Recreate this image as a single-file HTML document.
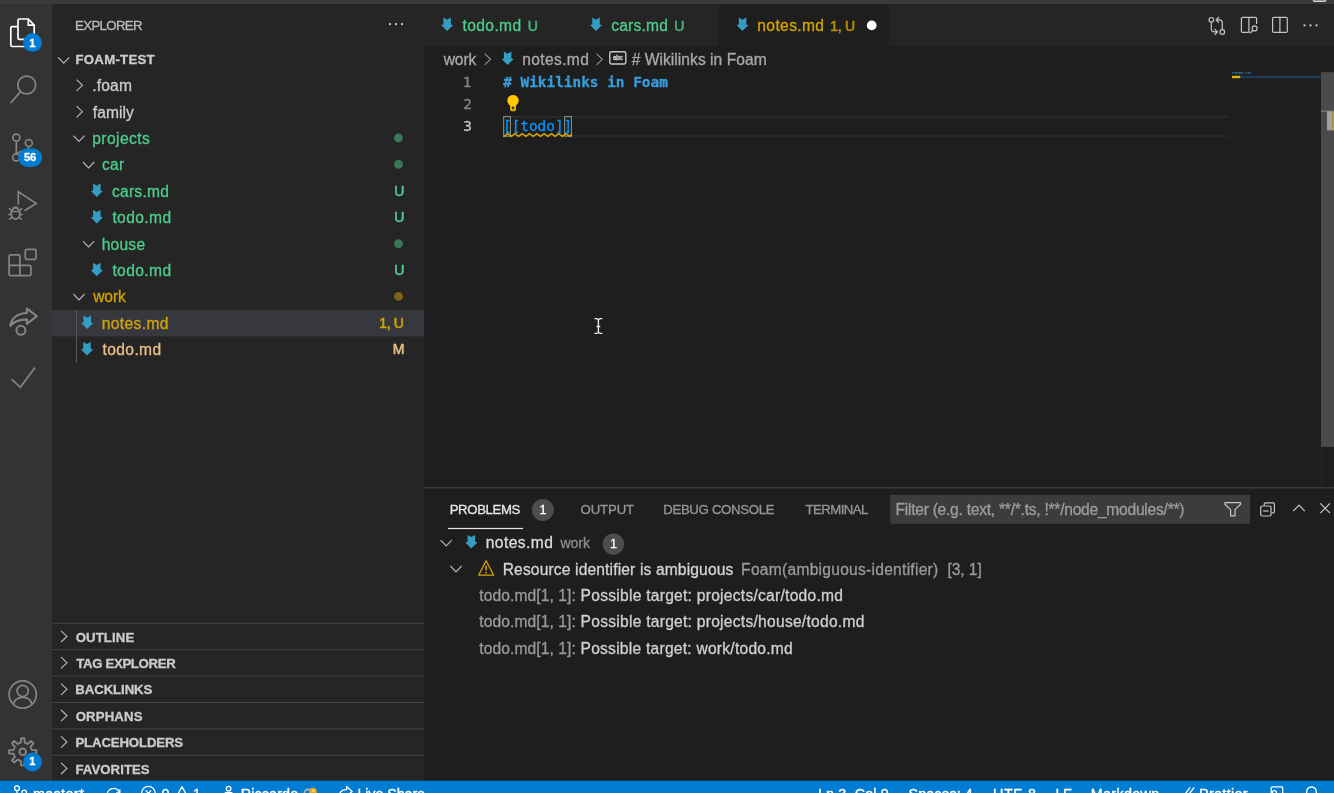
<!DOCTYPE html>
<html lang="en">
<head>
<meta charset="utf-8">
<title>notes.md - foam-test</title>
<style>
*{box-sizing:border-box;margin:0;padding:0}
html,body{width:1334px;height:793px;overflow:hidden;background:#1e1e1e}
body{position:relative;font-family:'Liberation Sans','Noto Sans CJK SC',sans-serif;font-size:15.6px;color:#cccccc}
.abs,.t{position:absolute;white-space:nowrap}
.t{line-height:1;height:1em;-webkit-text-stroke-width:0.3px}
svg{position:absolute;left:0;top:0;overflow:visible;pointer-events:none}
#txt{position:absolute;left:0;top:0;width:1334px;height:793px;will-change:transform}
</style>
</head>
<body>
<svg width="1334" height="793" viewBox="0 0 1334 793"><rect x="0" y="0" width="1334" height="4" fill="#3a3a3a"/>
<rect x="0" y="4" width="52" height="776.7" fill="#333333"/>
<rect x="52" y="4" width="372" height="776.7" fill="#252526"/>
<rect x="424" y="4" width="910" height="41.6" fill="#252526"/>
<rect x="719" y="4" width="169.8" height="41.6" fill="#1e1e1e"/>
<rect x="0" y="780.7" width="1334" height="12.3" fill="#007cd2"/>
<rect x="388.95" y="23.05" width="2.1" height="2.1" fill="#c5c5c5" rx="0.7"/>
<rect x="394.95" y="23.05" width="2.1" height="2.1" fill="#c5c5c5" rx="0.7"/>
<rect x="400.95" y="23.05" width="2.1" height="2.1" fill="#c5c5c5" rx="0.7"/>
<path d="M58.10 57.30 L63.70 63.10 L69.30 57.30" fill="none" stroke="#b8b8b8" stroke-width="1.15" stroke-linecap="butt" stroke-linejoin="miter" />
<rect x="52" y="310" width="372" height="26.4" fill="#37373e"/>
<rect x="76" y="310" width="1" height="52.8" fill="#585858"/>
<path d="M76.60 79.70 L82.40 85.30 L76.60 90.90" fill="none" stroke="#b8b8b8" stroke-width="1.15" stroke-linecap="butt" stroke-linejoin="miter" />
<path d="M76.60 106.10 L82.40 111.70 L76.60 117.30" fill="none" stroke="#b8b8b8" stroke-width="1.15" stroke-linecap="butt" stroke-linejoin="miter" />
<path d="M73.40 135.60 L79.00 141.40 L84.60 135.60" fill="none" stroke="#b8b8b8" stroke-width="1.15" stroke-linecap="butt" stroke-linejoin="miter" />
<circle cx="398.5" cy="138.00" r="4.4" fill="#4fcc8c" opacity="0.5"/>
<path d="M83.00 162.00 L88.60 167.80 L94.20 162.00" fill="none" stroke="#b8b8b8" stroke-width="1.15" stroke-linecap="butt" stroke-linejoin="miter" />
<circle cx="398.5" cy="164.40" r="4.4" fill="#4fcc8c" opacity="0.5"/>
<polygon points="93.10,183.60 96.70,185.70 100.60,183.60 100.60,190.40 102.90,191.00 96.70,197.10 90.90,191.00 93.10,190.40" fill="#349dc2" />
<polygon points="93.10,210.00 96.70,212.10 100.60,210.00 100.60,216.80 102.90,217.40 96.70,223.50 90.90,217.40 93.10,216.80" fill="#349dc2" />
<path d="M83.00 241.20 L88.60 247.00 L94.20 241.20" fill="none" stroke="#b8b8b8" stroke-width="1.15" stroke-linecap="butt" stroke-linejoin="miter" />
<circle cx="398.5" cy="243.60" r="4.4" fill="#4fcc8c" opacity="0.5"/>
<polygon points="93.10,262.80 96.70,264.90 100.60,262.80 100.60,269.60 102.90,270.20 96.70,276.30 90.90,270.20 93.10,269.60" fill="#349dc2" />
<path d="M73.40 294.00 L79.00 299.80 L84.60 294.00" fill="none" stroke="#b8b8b8" stroke-width="1.15" stroke-linecap="butt" stroke-linejoin="miter" />
<circle cx="398.5" cy="296.40" r="4.4" fill="#d3a500" opacity="0.5"/>
<polygon points="83.50,315.60 87.10,317.70 91.00,315.60 91.00,322.40 93.30,323.00 87.10,329.10 81.30,323.00 83.50,322.40" fill="#349dc2" />
<polygon points="83.30,342.00 86.90,344.10 90.80,342.00 90.80,348.80 93.10,349.40 86.90,355.50 81.10,349.40 83.30,348.80" fill="#349dc2" />
<rect x="52" y="622.8" width="372" height="1" fill="#454545"/>
<path d="M61.10 630.80 L66.90 636.40 L61.10 642.00" fill="none" stroke="#b8b8b8" stroke-width="1.15" stroke-linecap="butt" stroke-linejoin="miter" />
<rect x="52" y="649.2" width="372" height="1" fill="#454545"/>
<path d="M61.10 657.20 L66.90 662.80 L61.10 668.40" fill="none" stroke="#b8b8b8" stroke-width="1.15" stroke-linecap="butt" stroke-linejoin="miter" />
<rect x="52" y="675.6" width="372" height="1" fill="#454545"/>
<path d="M61.10 683.60 L66.90 689.20 L61.10 694.80" fill="none" stroke="#b8b8b8" stroke-width="1.15" stroke-linecap="butt" stroke-linejoin="miter" />
<rect x="52" y="702" width="372" height="1" fill="#454545"/>
<path d="M61.10 710.00 L66.90 715.60 L61.10 721.20" fill="none" stroke="#b8b8b8" stroke-width="1.15" stroke-linecap="butt" stroke-linejoin="miter" />
<rect x="52" y="728.4" width="372" height="1" fill="#454545"/>
<path d="M61.10 736.40 L66.90 742.00 L61.10 747.60" fill="none" stroke="#b8b8b8" stroke-width="1.15" stroke-linecap="butt" stroke-linejoin="miter" />
<rect x="52" y="754.8" width="372" height="1" fill="#454545"/>
<path d="M61.10 762.80 L66.90 768.40 L61.10 774.00" fill="none" stroke="#b8b8b8" stroke-width="1.15" stroke-linecap="butt" stroke-linejoin="miter" />
<path d="M17.9 26.7 H12.2 Q10.8 26.7 10.8 28.1 V45.1 Q10.8 46.5 12.2 46.5 H25.2" fill="none" stroke="#ffffff" stroke-width="1.7" stroke-linecap="butt" stroke-linejoin="miter" />
<path d="M28.3 19 H19.4 Q18 19 18 20.4 V37.9 Q18 39.3 19.4 39.3 H26 M34.2 34 V25.2 L28.3 19 V25.2 H34.2" fill="none" stroke="#ffffff" stroke-width="1.7" stroke-linecap="butt" stroke-linejoin="round" />
<circle cx="32.50" cy="42.60" r="9.50" fill="#007cd2" stroke="none" stroke-width="1.2" />
<circle cx="26.70" cy="85.00" r="8.90" fill="none" stroke="#858585" stroke-width="1.7" />
<path d="M20.60 91.60 L10.40 103.20" fill="none" stroke="#858585" stroke-width="1.7" stroke-linecap="butt" stroke-linejoin="miter" />
<circle cx="16.40" cy="137.70" r="3.50" fill="none" stroke="#858585" stroke-width="1.7" />
<circle cx="28.80" cy="143.00" r="3.50" fill="none" stroke="#858585" stroke-width="1.7" />
<circle cx="16.20" cy="157.40" r="3.50" fill="none" stroke="#858585" stroke-width="1.7" />
<path d="M16.40 141.20 L16.30 153.90" fill="none" stroke="#858585" stroke-width="1.7" stroke-linecap="butt" stroke-linejoin="miter" />
<path d="M28.6 146.5 C28.6 151 24 150.5 21 151.5 C18.5 152.3 17 153 16.6 154" fill="none" stroke="#858585" stroke-width="1.7" stroke-linecap="butt" stroke-linejoin="miter" />
<rect x="18.2" y="148.2" width="23.8" height="18.8" rx="9.4" fill="#007cd2"/>
<path d="M18.3 204.5 V191.9 L36.2 203.4 L24.6 210.8" fill="none" stroke="#858585" stroke-width="1.7" stroke-linecap="butt" stroke-linejoin="miter" />
<ellipse cx="15.5" cy="213.6" rx="4.4" ry="5.6" fill="none" stroke="#858585" stroke-width="1.7"/>
<path d="M11.3 211.4 H19.7 M12.5 208.6 Q15.5 205.3 18.5 208.6 M11.1 214.5 H8.3 M19.9 214.5 H22.7 M11.6 210.6 L8.9 208.2 M19.4 210.6 L22.1 208.2 M11.8 217.4 L9.1 219.6 M19.2 217.4 L21.9 219.6" fill="none" stroke="#858585" stroke-width="1.5" stroke-linecap="butt" stroke-linejoin="miter" />
<path d="M10.6 254.9 H18.4 Q19.9 254.9 19.9 256.4 V265.3 H29.4 Q30.9 265.3 30.9 266.8 V274.2 Q30.9 275.7 29.4 275.7 H10.6 Q9.1 275.7 9.1 274.2 V256.4 Q9.1 254.9 10.6 254.9 Z M9.1 265.3 H19.9 V275.7" fill="none" stroke="#858585" stroke-width="1.7" stroke-linecap="butt" stroke-linejoin="miter" />
<rect x="25.3" y="249.3" width="10.7" height="10" rx="1.5" fill="none" stroke="#858585" stroke-width="1.7"/>
<path d="M10.4 325.8 C11.2 318.4 17.2 313.4 26.9 313.0 V308.6 L36.8 316.2 L26.9 323.8 V319.4 C19.4 319.4 14.0 321.4 10.4 325.8 Z" fill="none" stroke="#858585" stroke-width="2.1" stroke-linecap="butt" stroke-linejoin="round" />
<circle cx="20.90" cy="330.30" r="4.50" fill="none" stroke="#858585" stroke-width="2.0" />
<path d="M11.50 379.20 L20.40 387.30 L35.00 367.40" fill="none" stroke="#858585" stroke-width="1.7" stroke-linecap="butt" stroke-linejoin="miter" />
<circle cx="22.70" cy="694.50" r="13.60" fill="none" stroke="#858585" stroke-width="1.7" />
<circle cx="22.70" cy="691.00" r="5.60" fill="none" stroke="#858585" stroke-width="1.7" />
<path d="M13.4 704.3 C14.5 699.8 18 697.4 22.7 697.4 C27.4 697.4 30.9 699.8 32 704.3" fill="none" stroke="#858585" stroke-width="1.7" stroke-linecap="butt" stroke-linejoin="miter" />
<path d="M21.09 738.19 L24.31 738.19 L24.66 742.71 L27.74 743.99 L31.18 741.04 L33.46 743.32 L30.51 746.76 L31.79 749.84 L36.31 750.19 L36.31 753.41 L31.79 753.76 L30.51 756.84 L33.46 760.28 L31.18 762.56 L27.74 759.61 L24.66 760.89 L24.31 765.41 L21.09 765.41 L20.74 760.89 L17.66 759.61 L14.22 762.56 L11.94 760.28 L14.89 756.84 L13.61 753.76 L9.09 753.41 L9.09 750.19 L13.61 749.84 L14.89 746.76 L11.94 743.32 L14.22 741.04 L17.66 743.99 L20.74 742.71 Z" fill="none" stroke="#858585" stroke-width="1.9" stroke-linecap="butt" stroke-linejoin="round" />
<circle cx="22.70" cy="751.80" r="3.30" fill="none" stroke="#858585" stroke-width="1.9" />
<circle cx="32.50" cy="761.90" r="9.50" fill="#007cd2" stroke="none" stroke-width="1.2" />
<polygon points="443.40,17.60 447.00,19.70 450.90,17.60 450.90,24.40 453.20,25.00 447.00,31.10 441.20,25.00 443.40,24.40" fill="#349dc2" />
<polygon points="592.30,17.60 595.90,19.70 599.80,17.60 599.80,24.40 602.10,25.00 595.90,31.10 590.10,25.00 592.30,24.40" fill="#349dc2" />
<polygon points="738.80,17.60 742.40,19.70 746.30,17.60 746.30,24.40 748.60,25.00 742.40,31.10 736.60,25.00 738.80,24.40" fill="#349dc2" />
<circle cx="871.70" cy="25.40" r="4.90" fill="#ffffff" stroke="none" stroke-width="1.2" />
<circle cx="1211.30" cy="19.80" r="2.30" fill="none" stroke="#c5c5c5" stroke-width="1.2" />
<circle cx="1222.30" cy="32.00" r="2.30" fill="none" stroke="#c5c5c5" stroke-width="1.2" />
<path d="M1211.3 22.3 V28.8 Q1211.3 31.9 1214.4 31.9 H1217 M1214.6 29.0 L1217.4 31.9 L1214.6 34.8" fill="none" stroke="#c5c5c5" stroke-width="1.2" stroke-linecap="butt" stroke-linejoin="miter" />
<path d="M1222.3 29.5 V23 Q1222.3 19.9 1219.2 19.9 H1216.6 M1219 17 L1216.2 19.9 L1219 22.8" fill="none" stroke="#c5c5c5" stroke-width="1.2" stroke-linecap="butt" stroke-linejoin="miter" />
<path d="M1256.6 24 V18.6 Q1256.6 17.4 1255.4 17.4 H1242.6 Q1241.4 17.4 1241.4 18.6 V31.2 Q1241.4 32.4 1242.6 32.4 H1248.9 V17.4" fill="none" stroke="#c5c5c5" stroke-width="1.2" stroke-linecap="butt" stroke-linejoin="miter" />
<circle cx="1254.60" cy="28.40" r="2.50" fill="none" stroke="#c5c5c5" stroke-width="1.2" />
<path d="M1252.70 30.40 L1250.00 33.30" fill="none" stroke="#c5c5c5" stroke-width="1.2" stroke-linecap="butt" stroke-linejoin="miter" />
<rect x="1272.6" y="17.4" width="14.7" height="15" rx="1.2" fill="none" stroke="#c5c5c5" stroke-width="1.2"/>
<path d="M1279.90 17.40 L1279.90 32.40" fill="none" stroke="#c5c5c5" stroke-width="1.2" stroke-linecap="butt" stroke-linejoin="miter" />
<circle cx="1304.50" cy="25.40" r="1.15" fill="#c5c5c5" stroke="none" stroke-width="1.2" />
<circle cx="1310.50" cy="25.40" r="1.15" fill="#c5c5c5" stroke="none" stroke-width="1.2" />
<circle cx="1316.50" cy="25.40" r="1.15" fill="#c5c5c5" stroke="none" stroke-width="1.2" />
<rect x="1313.3" y="-10" width="12.4" height="11.4" rx="1.1" fill="#7a7a7a" stroke="#d4d4d4" stroke-width="1.2"/>
<path d="M484.70 53.70 L490.50 59.30 L484.70 64.90" fill="none" stroke="#929292" stroke-width="1.15" stroke-linecap="butt" stroke-linejoin="miter" />
<polygon points="503.90,51.60 507.50,53.70 511.40,51.60 511.40,58.40 513.70,59.00 507.50,65.10 501.70,59.00 503.90,58.40" fill="#349dc2" />
<path d="M596.50 53.70 L602.30 59.30 L596.50 64.90" fill="none" stroke="#929292" stroke-width="1.15" stroke-linecap="butt" stroke-linejoin="miter" />
<rect x="609.8" y="51.8" width="16" height="12.2" rx="1.4" fill="none" stroke="#c8c8c8" stroke-width="1.4"/>
<rect x="503" y="115.8" width="725" height="2.3" fill="#282828"/>
<rect x="503" y="134.9" width="725" height="2.3" fill="#282828"/>
<rect x="503.65000000000003" y="116.55" width="6.8" height="19.7" fill="rgba(0,100,0,0.1)" stroke="#888888" stroke-width="1.1"/>
<rect x="564.65" y="116.55" width="6.8" height="19.7" fill="rgba(0,100,0,0.1)" stroke="#888888" stroke-width="1.1"/>
<path d="M503.2 136.0 L504.0 136.4 L507.6 133.6 L511.3 136.4 L514.9 133.6 L518.6 136.4 L522.2 133.6 L525.9 136.4 L529.5 133.6 L533.2 136.4 L536.8 133.6 L540.5 136.4 L544.1 133.6 L547.8 136.4 L551.4 133.6 L555.1 136.4 L558.7 133.6 L562.4 136.4 L566.0 133.6 L569.7 136.4 L571.9 133.6" fill="none" stroke="#d3a500" stroke-width="1.5" stroke-linecap="butt" stroke-linejoin="round" />
<path d="M513 94.9 C516.3 94.9 518.7 97.4 518.7 100.5 C518.7 102.7 517.4 104.2 516.0 105.8 V108.4 Q516.0 111.2 513.2 111.2 H512.8 Q510.0 111.2 510.0 108.4 V105.8 C508.6 104.2 507.3 102.7 507.3 100.5 C507.3 97.4 509.7 94.9 513 94.9 Z" fill="#ffc900" stroke="none" stroke-width="1.2" stroke-linecap="butt" stroke-linejoin="miter" />
<path d="M510.2 106.2 H515.8 V108.4 Q515.8 111 513.2 111 H512.8 Q510.2 111 510.2 108.4 Z" fill="#ddae00" stroke="none" stroke-width="1.2" stroke-linecap="butt" stroke-linejoin="miter" />
<rect x="512.15" y="106.5" width="1.7" height="2.9" rx="0.8" fill="#1a1a22"/>
<rect x="1232" y="71.9" width="1" height="1.8" fill="#389edb" opacity="0.7"/>
<rect x="1234" y="71.9" width="9.2" height="1.8" fill="#389edb" opacity="0.5"/>
<rect x="1244.6" y="71.9" width="1.8" height="1.8" fill="#389edb" opacity="0.4"/>
<rect x="1247.3" y="71.9" width="3.7" height="1.8" fill="#389edb" opacity="0.5"/>
<rect x="1232" y="75.8" width="89" height="2.4" fill="#1f3a54"/>
<rect x="1232" y="75.8" width="8.2" height="2.4" fill="#e0b400"/>
<rect x="1321" y="72.2" width="13" height="374.7" fill="#4a4a4a"/>
<rect x="1321" y="446.9" width="1" height="40.3" fill="#262626"/>
<rect x="1321" y="110.6" width="13" height="1.2" fill="#7c7c7c"/>
<rect x="1327" y="111.2" width="5.6" height="19.2" fill="#a0a0a0"/>
<rect x="1332.6" y="111.8" width="1.4" height="18.6" fill="#bfa12a"/>
<path d="M595.0 318.6 H596.6 Q598.4 318.8 598.4 320.6 Q598.4 318.8 600.2 318.6 H601.9 M598.4 320.2 V331.8 M595.0 333.4 H596.6 Q598.4 333.2 598.4 331.4 Q598.4 333.2 600.2 333.4 H601.9 M597.0 326.5 H599.8" fill="none" stroke="#f2f2f2" stroke-width="1.3" stroke-linecap="round" stroke-linejoin="round" />
<rect x="424" y="487.2" width="910" height="1.2" fill="#414141"/>
<circle cx="542.90" cy="510.00" r="11.00" fill="#4d4d4d" stroke="none" stroke-width="1.2" />
<rect x="448" y="527.9" width="75" height="1.2" fill="#e7e7e7"/>
<rect x="890.2" y="494.9" width="359.8" height="28.9" fill="#3c3c3c"/>
<path d="M1225.0 502.7 H1240.6 V504.2 L1235.0 509.6 V515.9 H1230.6 V509.6 L1225.0 504.2 Z" fill="none" stroke="#c5c5c5" stroke-width="1.2" stroke-linecap="butt" stroke-linejoin="round" />
<path d="M1264.2 505.4 V503.9 Q1264.2 502.8 1265.3 502.8 H1273.3 Q1274.4 502.8 1274.4 503.9 V511.7 Q1274.4 512.8 1273.3 512.8 H1271.6" fill="none" stroke="#c5c5c5" stroke-width="1.2" stroke-linecap="butt" stroke-linejoin="miter" />
<rect x="1260.7" y="506.0" width="10.3" height="10.0" rx="1.5" fill="none" stroke="#c5c5c5" stroke-width="1.2"/>
<path d="M1263.20 511.00 L1268.60 511.00" fill="none" stroke="#c5c5c5" stroke-width="1.2" stroke-linecap="butt" stroke-linejoin="miter" />
<path d="M1293.20 511.20 L1299.00 505.20 L1304.80 511.20" fill="none" stroke="#c5c5c5" stroke-width="1.2" stroke-linecap="butt" stroke-linejoin="miter" />
<path d="M1320.3 503.3 L1330.0 513.2 M1330.0 503.3 L1320.3 513.2" fill="none" stroke="#c5c5c5" stroke-width="1.2" stroke-linecap="butt" stroke-linejoin="miter" />
<path d="M440.60 540.10 L446.20 545.90 L451.80 540.10" fill="none" stroke="#b8b8b8" stroke-width="1.15" stroke-linecap="butt" stroke-linejoin="miter" />
<polygon points="467.60,535.00 471.20,537.10 475.10,535.00 475.10,541.80 477.40,542.40 471.20,548.50 465.40,542.40 467.60,541.80" fill="#349dc2" />
<circle cx="613.40" cy="544.10" r="10.70" fill="#4d4d4d" stroke="none" stroke-width="1.2" />
<path d="M450.40 566.00 L456.00 571.80 L461.60 566.00" fill="none" stroke="#b8b8b8" stroke-width="1.15" stroke-linecap="butt" stroke-linejoin="miter" />
<path d="M486.1 560.8 L493.6 575.2 H478.6 Z" fill="none" stroke="#d3a500" stroke-width="1.3" stroke-linecap="butt" stroke-linejoin="round" />
<path d="M486.1 565.6 V570.4" fill="none" stroke="#d3a500" stroke-width="1.5" stroke-linecap="butt" stroke-linejoin="miter" />
<circle cx="486.10" cy="572.70" r="0.85" fill="#d3a500" stroke="none" stroke-width="1.2" />
<circle cx="17.00" cy="788.30" r="2.40" fill="none" stroke="#ffffff" stroke-width="1.3" />
<circle cx="24.20" cy="792.30" r="2.20" fill="none" stroke="#ffffff" stroke-width="1.3" />
<path d="M17.00 790.70 L17.00 800.00" fill="none" stroke="#ffffff" stroke-width="1.3" stroke-linecap="butt" stroke-linejoin="miter" />
<path d="M107.2 794 A6.3 6.3 0 0 1 119.2 792.2" fill="none" stroke="#ffffff" stroke-width="1.3" stroke-linecap="butt" stroke-linejoin="miter" />
<path d="M119.8 789.2 V792.8 H116.2" fill="none" stroke="#ffffff" stroke-width="1.3" stroke-linecap="butt" stroke-linejoin="miter" />
<circle cx="148.40" cy="793.20" r="6.80" fill="none" stroke="#ffffff" stroke-width="1.3" />
<path d="M145.6 790.4 L151.2 796 M151.2 790.4 L145.6 796" fill="none" stroke="#ffffff" stroke-width="1.3" stroke-linecap="butt" stroke-linejoin="miter" />
<path d="M182.0 786.6 L189.2 800 H174.8 Z" fill="none" stroke="#ffffff" stroke-width="1.3" stroke-linecap="butt" stroke-linejoin="round" />
<circle cx="228.60" cy="788.60" r="2.30" fill="none" stroke="#ffffff" stroke-width="1.3" />
<path d="M224.6 797 V794.6 Q224.6 792.4 226.8 792.4 H230.4 Q232.6 792.4 232.6 794.6 V797" fill="none" stroke="#ffffff" stroke-width="1.3" stroke-linecap="butt" stroke-linejoin="miter" />
<circle cx="308.00" cy="793.00" r="3.60" fill="none" stroke="#b8b8b8" stroke-width="1.6" />
<circle cx="313.00" cy="791.60" r="3.80" fill="#f0a818" stroke="none" stroke-width="1.2" />
<circle cx="313.40" cy="790.60" r="1.20" fill="#fff0b0" stroke="none" stroke-width="1.2" />
<path d="M339.2 796 C339.6 791.6 343 789.6 346.6 789.6 V786.6 L352.2 791.4 L346.6 796" fill="none" stroke="#ffffff" stroke-width="1.3" stroke-linecap="butt" stroke-linejoin="round" />
<path d="M1185.6 793.4 L1190.2 787.4 M1189.6 793.4 L1194.2 787.4" fill="none" stroke="#ffffff" stroke-width="1.3" stroke-linecap="butt" stroke-linejoin="miter" />
<path d="M1271.2 793 V788 Q1271.2 786.9 1272.3 786.9 H1281.6 Q1282.7 786.9 1282.7 788 V793" fill="none" stroke="#ffffff" stroke-width="1.3" stroke-linecap="butt" stroke-linejoin="miter" />
<circle cx="1274.40" cy="792.60" r="2.00" fill="none" stroke="#ffffff" stroke-width="1.3" />
<path d="M1306.6 793 C1306.6 789 1308.6 787 1311.5 787 C1314.4 787 1316.4 789 1316.4 793" fill="none" stroke="#ffffff" stroke-width="1.3" stroke-linecap="butt" stroke-linejoin="miter" /></svg>
<div id="txt">
<div class="t" style="left:75.10px;top:19px;font-size:13.2px;color:#bbbbbb;letter-spacing:-0.636px;">EXPLORER</div>
<div class="t" style="left:75.52px;top:53px;font-size:13.2px;color:#cccccc;font-weight:700;letter-spacing:0.269px;">FOAM-TEST</div>
<div class="t" style="left:92.30px;top:78px;font-size:15.6px;color:#cccccc;letter-spacing:0.150px;">.foam</div>
<div class="t" style="left:92.85px;top:105px;font-size:15.6px;color:#cccccc;letter-spacing:0.030px;">family</div>
<div class="t" style="left:92.23px;top:131px;font-size:15.6px;color:#4fcc8c;letter-spacing:0.414px;">projects</div>
<div class="t" style="left:102.05px;top:157px;font-size:15.6px;color:#4fcc8c;letter-spacing:0.200px;">car</div>
<div class="t" style="left:111.92px;top:184px;font-size:15.6px;color:#4fcc8c;letter-spacing:0.258px;">cars.md</div>
<div class="t" style="left:394.25px;top:184px;font-size:14.04px;color:#4fcc8c;-webkit-text-stroke-width:0.55px;">U</div>
<div class="t" style="left:112.42px;top:210px;font-size:15.6px;color:#4fcc8c;letter-spacing:0.383px;">todo.md</div>
<div class="t" style="left:394.25px;top:210px;font-size:14.04px;color:#4fcc8c;-webkit-text-stroke-width:0.55px;">U</div>
<div class="t" style="left:101.68px;top:237px;font-size:15.6px;color:#4fcc8c;letter-spacing:0.225px;">house</div>
<div class="t" style="left:112.42px;top:263px;font-size:15.6px;color:#4fcc8c;letter-spacing:0.383px;">todo.md</div>
<div class="t" style="left:394.25px;top:263px;font-size:14.04px;color:#4fcc8c;-webkit-text-stroke-width:0.55px;">U</div>
<div class="t" style="left:93.15px;top:289px;font-size:15.6px;color:#d3a500;letter-spacing:-0.083px;">work</div>
<div class="t" style="left:101.75px;top:316px;font-size:15.6px;color:#d3a500;letter-spacing:0.379px;">notes.md</div>
<div class="t" style="left:379.32px;top:316px;font-size:14.04px;color:#d3a500;letter-spacing:-0.350px;-webkit-text-stroke-width:0.55px;">1, U</div>
<div class="t" style="left:102.58px;top:342px;font-size:15.6px;color:#e9be85;letter-spacing:0.367px;">todo.md</div>
<div class="t" style="left:392.70px;top:342px;font-size:14.04px;color:#e9be85;-webkit-text-stroke-width:0.55px;">M</div>
<div class="t" style="left:75.68px;top:631px;font-size:13.2px;color:#cccccc;font-weight:700;letter-spacing:0.117px;">OUTLINE</div>
<div class="t" style="left:76.20px;top:657px;font-size:13.2px;color:#cccccc;font-weight:700;letter-spacing:-0.318px;">TAG EXPLORER</div>
<div class="t" style="left:75.35px;top:683px;font-size:13.2px;color:#cccccc;font-weight:700;letter-spacing:-0.088px;">BACKLINKS</div>
<div class="t" style="left:75.65px;top:710px;font-size:13.2px;color:#cccccc;font-weight:700;letter-spacing:0.150px;">ORPHANS</div>
<div class="t" style="left:75.45px;top:736px;font-size:13.2px;color:#cccccc;font-weight:700;letter-spacing:-0.136px;">PLACEHOLDERS</div>
<div class="t" style="left:75.50px;top:763px;font-size:13.2px;color:#cccccc;font-weight:700;letter-spacing:0.044px;">FAVORITES</div>
<div class="t" style="left:29.30px;top:38px;font-size:11.2px;color:#ffffff;font-weight:700;">1</div>
<div class="t" style="left:24.08px;top:152px;font-size:11.2px;color:#ffffff;font-weight:700;letter-spacing:-0.200px;">56</div>
<div class="t" style="left:29.15px;top:756px;font-size:11.2px;color:#ffffff;font-weight:700;">1</div>
<div class="t" style="left:462.52px;top:18px;font-size:15.6px;color:#4fcc8c;letter-spacing:0.383px;">todo.md</div>
<div class="t" style="left:527.65px;top:19px;font-size:14.04px;color:#4fcc8c;opacity:0.85;-webkit-text-stroke-width:0.55px;">U</div>
<div class="t" style="left:611.22px;top:18px;font-size:15.6px;color:#4fcc8c;letter-spacing:0.208px;">cars.md</div>
<div class="t" style="left:674.30px;top:19px;font-size:14.04px;color:#4fcc8c;opacity:0.85;-webkit-text-stroke-width:0.55px;">U</div>
<div class="t" style="left:757.33px;top:18px;font-size:15.6px;color:#d3a500;letter-spacing:0.364px;">notes.md</div>
<div class="t" style="left:830.22px;top:19px;font-size:14.04px;color:#d3a500;letter-spacing:-0.283px;opacity:0.85;-webkit-text-stroke-width:0.55px;">1, U</div>
<div class="t" style="left:443.70px;top:52px;font-size:15.6px;color:#a9a9a9;letter-spacing:-0.117px;">work</div>
<div class="t" style="left:522.33px;top:52px;font-size:15.6px;color:#a9a9a9;letter-spacing:0.336px;">notes.md</div>
<div class="t" style="left:613.07px;top:55px;font-size:6.5px;color:#c8c8c8;font-weight:700;letter-spacing:-0.675px;">abc</div>
<div class="t" style="left:631.67px;top:52px;font-size:15.6px;color:#a9a9a9;letter-spacing:0.039px;"># Wikilinks in Foam</div>
<div class="t" style="left:462.87px;top:75px;font-size:14.4px;color:#858585;font-family:'DejaVu Sans Mono','Liberation Mono',monospace;">1</div>
<div class="t" style="left:463.25px;top:97px;font-size:14.4px;color:#858585;font-family:'DejaVu Sans Mono','Liberation Mono',monospace;">2</div>
<div class="t" style="left:463.25px;top:119px;font-size:14.4px;color:#c6c6c6;font-family:'DejaVu Sans Mono','Liberation Mono',monospace;">3</div>
<div class="t" style="left:503.20px;top:75px;font-size:14.4px;color:#389edb;font-weight:700;font-family:'DejaVu Sans Mono','Liberation Mono',monospace;"># Wikilinks in Foam</div>
<div class="t" style="left:502.98px;top:119px;font-size:14.4px;color:#0096ff;font-family:'DejaVu Sans Mono','Liberation Mono',monospace;">[[todo]]</div>
<div class="t" style="left:449.67px;top:503px;font-size:13.2px;color:#e7e7e7;letter-spacing:-0.364px;">PROBLEMS</div>
<div class="t" style="left:539.53px;top:504px;font-size:12.6px;color:#ffffff;">1</div>
<div class="t" style="left:580.62px;top:503px;font-size:13.2px;color:#979797;letter-spacing:-0.140px;">OUTPUT</div>
<div class="t" style="left:663.20px;top:503px;font-size:13.2px;color:#979797;letter-spacing:-0.312px;">DEBUG CONSOLE</div>
<div class="t" style="left:805.52px;top:503px;font-size:13.2px;color:#979797;letter-spacing:-0.550px;">TERMINAL</div>
<div class="t" style="left:895.43px;top:502px;font-size:15.6px;color:#9d9d9d;letter-spacing:-0.249px;">Filter (e.g. text, **/*.ts, !**/node_modules/**)</div>
<div class="t" style="left:485.65px;top:535px;font-size:15.6px;color:#dddddd;letter-spacing:0.450px;">notes.md</div>
<div class="t" style="left:560.45px;top:536px;font-size:14.04px;color:#8f8f8f;">work</div>
<div class="t" style="left:610.03px;top:538px;font-size:12.6px;color:#ffffff;">1</div>
<div class="t" style="left:502.67px;top:562px;font-size:15.6px;color:#d4d4d4;letter-spacing:0.144px;">Resource identifier is ambiguous</div>
<div class="t" style="left:741.10px;top:562px;font-size:15.6px;color:#9a9a9a;letter-spacing:0.260px;">Foam(ambiguous-identifier)</div>
<div class="t" style="left:947.52px;top:562px;font-size:15.6px;color:#9a9a9a;letter-spacing:-0.090px;">[3, 1]</div>
<div class="t" style="left:479.33px;top:588px;font-size:15.6px;color:#9a9a9a;letter-spacing:0.085px;">todo.md[1, 1]:</div>
<div class="t" style="left:580.60px;top:588px;font-size:15.6px;color:#d0d0d0;letter-spacing:0.257px;">Possible target: projects/car/todo.md</div>
<div class="t" style="left:479.33px;top:614px;font-size:15.6px;color:#9a9a9a;letter-spacing:0.085px;">todo.md[1, 1]:</div>
<div class="t" style="left:580.55px;top:614px;font-size:15.6px;color:#d0d0d0;letter-spacing:0.261px;">Possible target: projects/house/todo.md</div>
<div class="t" style="left:479.33px;top:641px;font-size:15.6px;color:#9a9a9a;letter-spacing:0.085px;">todo.md[1, 1]:</div>
<div class="t" style="left:580.50px;top:641px;font-size:15.6px;color:#d0d0d0;letter-spacing:0.243px;">Possible target: work/todo.md</div>
<div class="t" style="left:33.00px;top:787px;font-size:14.4px;color:#ffffff;letter-spacing:0.308px;">master*</div>
<div class="t" style="left:161.55px;top:787px;font-size:14.4px;color:#ffffff;">0</div>
<div class="t" style="left:192.80px;top:787px;font-size:14.4px;color:#ffffff;">1</div>
<div class="t" style="left:240.75px;top:787px;font-size:14.4px;color:#ffffff;letter-spacing:0.093px;">Riccardo</div>
<div class="t" style="left:357.38px;top:787px;font-size:14.4px;color:#ffffff;letter-spacing:-0.117px;">Live Share</div>
<div class="t" style="left:817.98px;top:787px;font-size:14.4px;color:#ffffff;letter-spacing:0.120px;">Ln 3, Col 9</div>
<div class="t" style="left:908.62px;top:787px;font-size:14.4px;color:#ffffff;letter-spacing:0.006px;">Spaces: 4</div>
<div class="t" style="left:993.05px;top:787px;font-size:14.4px;color:#ffffff;letter-spacing:0.537px;">UTF-8</div>
<div class="t" style="left:1055.40px;top:787px;font-size:14.4px;color:#ffffff;letter-spacing:-0.500px;">LF</div>
<div class="t" style="left:1090.68px;top:787px;font-size:14.4px;color:#ffffff;letter-spacing:0.314px;">Markdown</div>
<div class="t" style="left:1199.00px;top:787px;font-size:14.4px;color:#ffffff;letter-spacing:0.321px;">Prettier</div>
</div>
</body>
</html>
